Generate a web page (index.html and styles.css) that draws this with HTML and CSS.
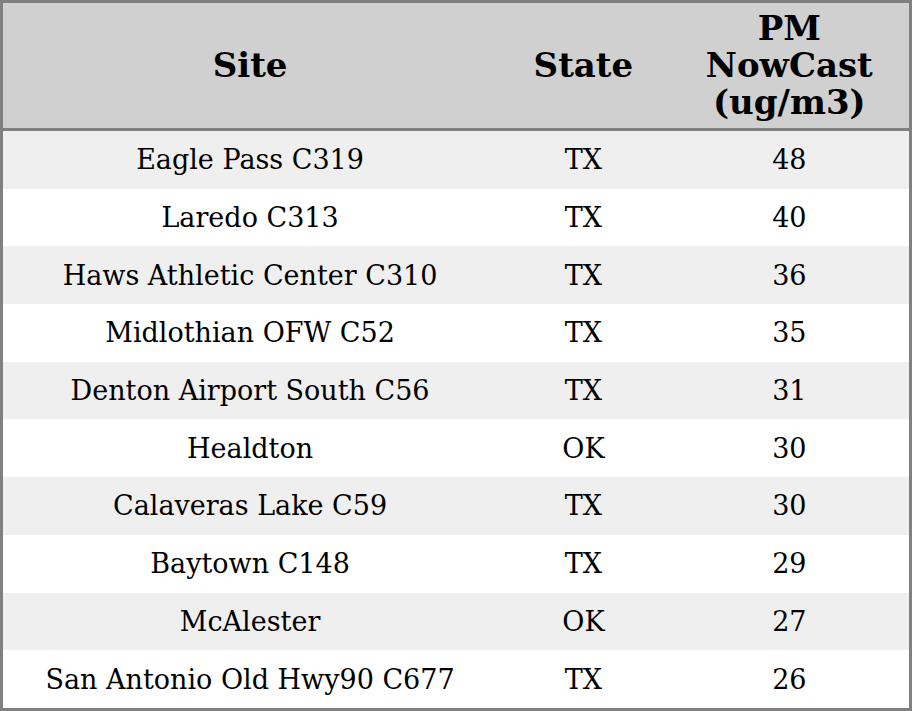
FILE: index.html
```html
<!DOCTYPE html>
<html>
<head>
<meta charset="utf-8">
<link rel="stylesheet" href="styles.css">
</head>
<body>
<table class="aq-table">
  <thead>
    <tr>
      <th class="col-site">Site</th>
      <th class="col-state">State</th>
      <th class="col-pm">PM<br>NowCast<br>(ug/m3)</th>
    </tr>
  </thead>
  <tbody>
    <tr><td>Eagle Pass C319</td><td>TX</td><td>48</td></tr>
    <tr><td>Laredo C313</td><td>TX</td><td>40</td></tr>
    <tr><td>Haws Athletic Center C310</td><td>TX</td><td>36</td></tr>
    <tr><td>Midlothian OFW C52</td><td>TX</td><td>35</td></tr>
    <tr><td>Denton Airport South C56</td><td>TX</td><td>31</td></tr>
    <tr><td>Healdton</td><td>OK</td><td>30</td></tr>
    <tr><td>Calaveras Lake C59</td><td>TX</td><td>30</td></tr>
    <tr><td>Baytown C148</td><td>TX</td><td>29</td></tr>
    <tr><td>McAlester</td><td>OK</td><td>27</td></tr>
    <tr><td>San Antonio Old Hwy90 C677</td><td>TX</td><td>26</td></tr>
  </tbody>
</table>
</body>
</html>
```
FILE: styles.css
```css
html, body {
  margin: 0;
  padding: 0;
  background: #ffffff;
}
.aq-table {
  width: 912px;
  border-collapse: collapse;
  border: 3px solid #808080;
  font-family: "DejaVu Serif", serif;
  color: #000;
  table-layout: fixed;
}
.aq-table th {
  background: #d0d0d0;
  font-weight: bold;
  font-size: 34px;
  line-height: 37px;
  height: 128px;
  padding: 0;
  text-align: center;
  vertical-align: middle;
  border-bottom: 3px solid #808080;
  box-sizing: border-box;
}
.col-site { width: 494px; }
.col-state { width: 172px; }
.col-pm { width: 240px; }
.aq-table td {
  font-size: 27px;
  line-height: 31px;
  padding: 13.35px 0;
  text-align: center;
  vertical-align: middle;
}
.aq-table tbody tr:nth-child(odd) td {
  background: #efefef;
}
```
